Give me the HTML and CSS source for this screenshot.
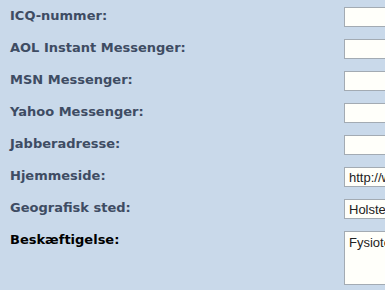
FILE: index.html
```html
<!DOCTYPE html>
<html lang="da">
<head>
  <meta charset="UTF-8" />
  <title>Profil</title>
  <link rel="stylesheet" href="styles.css">
</head>
<body>
  <div class="form">
    <div class="row">
      <label class="label">ICQ-nummer:</label>
      <input class="field" type="text" value="">
    </div>
    <div class="row">
      <label class="label">AOL Instant Messenger:</label>
      <input class="field" type="text" value="">
    </div>
    <div class="row">
      <label class="label">MSN Messenger:</label>
      <input class="field" type="text" value="">
    </div>
    <div class="row">
      <label class="label">Yahoo Messenger:</label>
      <input class="field" type="text" value="">
    </div>
    <div class="row">
      <label class="label">Jabberadresse:</label>
      <input class="field" type="text" value="">
    </div>
    <div class="row">
      <label class="label">Hjemmeside:</label>
      <input class="field" type="text" value="http://www.">
    </div>
    <div class="row">
      <label class="label">Geografisk sted:</label>
      <input class="field" type="text" value="Holstebro">
    </div>
    <div class="row">
      <label class="label dark">Beskæftigelse:</label>
      <textarea class="field area">Fysioterapeut</textarea>
    </div>
  </div>
</body>
</html>
```

FILE: styles.css
```css
* {
  box-sizing: border-box;
}
body {
  margin: 0;
  background: #c9d9ea;
  overflow: hidden;
}
.form {
  padding-top: 7px;
  overflow: hidden;
}
.row {
  display: flex;
  align-items: flex-start;
  margin-bottom: 12px;
}
.label {
  width: 344px;
  flex-shrink: 0;
  padding-left: 10px;
  padding-top: 1px;
  font-family: "DejaVu Sans", Verdana, sans-serif;
  font-size: 13px;
  font-weight: bold;
  line-height: 16px;
  color: #3e4c63;
}
.label.dark {
  color: #000;
}
.field {
  flex-shrink: 0;
  width: 200px;
  height: 20px;
  margin: 0;
  padding: 1px 4px;
  border: 1px solid #a3abb3;
  background: #fffffa;
  font-family: "Liberation Sans", Arial, sans-serif;
  font-size: 13px;
  color: #222;
}
.area {
  height: 54px;
  resize: none;
  padding: 3px 4px;
}
```
